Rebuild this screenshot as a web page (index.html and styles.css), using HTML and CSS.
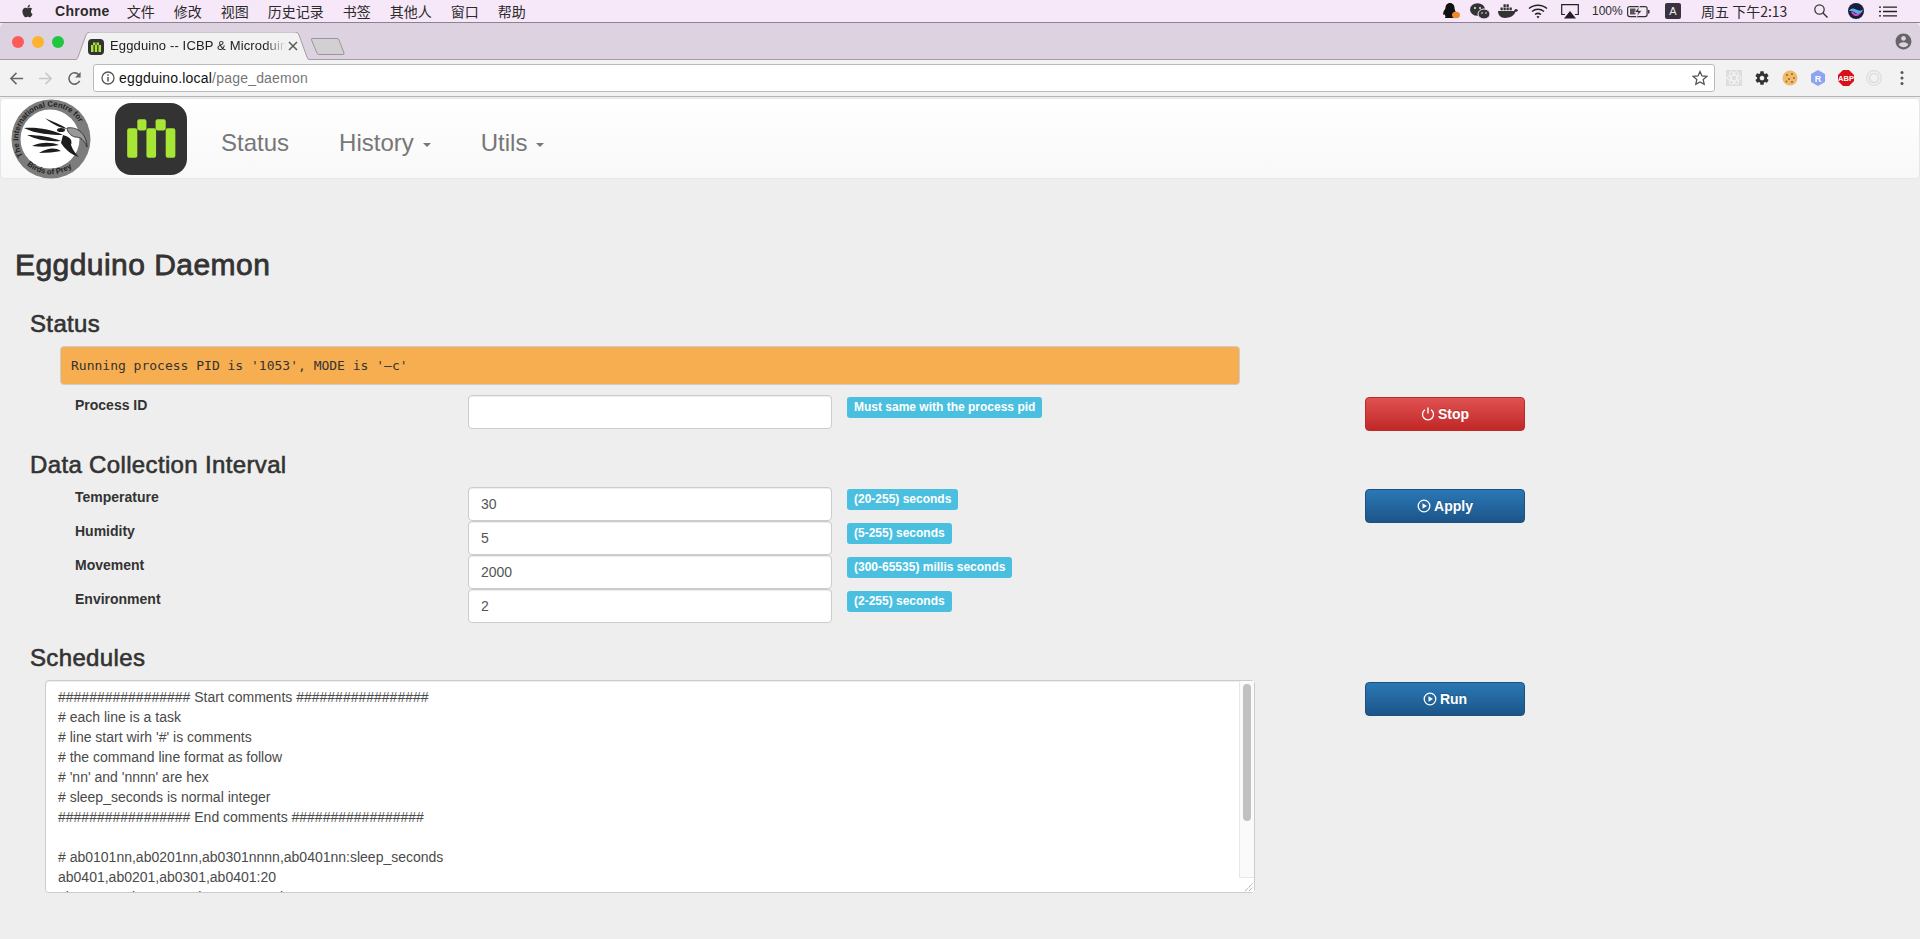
FILE: index.html
```html
<!DOCTYPE html>
<html>
<head>
	<title>Eggduino Daemon</title>
	<link rel="stylesheet" href="styles.css">
</head>
<body>
	<!-- mac menu bar -->
	<div class="menubar">
		<div class="menu-left">
			<svg class="apple" viewBox="0 0 24 24"><path d="M18.71 19.5c-.83 1.24-1.71 2.45-3.05 2.47-1.34.03-1.77-.79-3.29-.79-1.53 0-2 .77-3.27.82-1.31.05-2.3-1.32-3.14-2.53C4.25 17 2.94 12.45 4.7 9.39c.87-1.52 2.43-2.48 4.12-2.51 1.28-.02 2.5.87 3.29.87.78 0 2.26-1.07 3.8-.91.65.03 2.47.26 3.64 1.98-.09.06-2.17 1.28-2.15 3.81.03 3.02 2.65 4.03 2.68 4.04-.03.07-.42 1.44-1.38 2.83M13 3.5c.73-.83 1.94-1.46 2.94-1.5.13 1.17-.34 2.35-1.04 3.19-.69.85-1.83 1.51-2.95 1.42-.15-1.15.41-2.35 1.05-3.11z"/></svg>
			<strong class="app-name">Chrome</strong>
			<span>文件</span>
			<span>修改</span>
			<span>视图</span>
			<span>历史记录</span>
			<span>书签</span>
			<span>其他人</span>
			<span>窗口</span>
			<span>帮助</span>
		</div>
		<div class="menu-right">
			<svg class="tray tray-qq" viewBox="0 0 17 16"><path d="M7 0c3 0 4.5 2.4 4.5 5 0 1 .8 2.5 1.2 4.500.3 1.500 0 2.500-.7 2.500l-.8-.8c0 1.500-1 2.300-1 2.300.8.300 1 1 .6 1.500H2.200c-.6-.5-.2-1.200.6-1.500 0 0-1-.8-1-2.300l-.8.8c-.8 0-1-1-.7-2.500C.7 7.500 2.500 6 2.500 5 2.500 2.400 4 0 7 0z" fill="#111"/><ellipse cx="13" cy="12" rx="4" ry="3.200" fill="#ee8a2e"/></svg>
			<svg class="tray tray-wechat" viewBox="0 0 20 17"><ellipse cx="7.500" cy="6.500" rx="7.500" ry="6.300" fill="#333"/><ellipse cx="14" cy="11" rx="6" ry="5" fill="#333" stroke="#f6e8f8" stroke-width="1"/><circle cx="5" cy="5" r="1" fill="#f6e8f8"/><circle cx="10" cy="5" r="1" fill="#f6e8f8"/><circle cx="12" cy="10" r=".8" fill="#f6e8f8"/><circle cx="16" cy="10" r=".8" fill="#f6e8f8"/></svg>
			<svg class="tray tray-docker" viewBox="0 0 20 14"><path d="M0 7h16c.5-1.500 1.500-2 2-2 0 0 2 .5 2 1.500-.5 1-1.500 1.300-2.500 1.300C16 12 12 14 7 14 2.500 14 0 11 0 7z" fill="#333"/><path d="M2.500 3.500h2.300v2.800H2.500zM5.500 3.500h2.300v2.800H5.500zM8.500 3.500h2.300v2.800H8.500zM5.500.3h2.300v2.600H5.500zM8.500.3h2.300v2.600H8.500zM11.500 3.500h2.300v2.800h-2.300z" fill="#333"/></svg>
			<svg class="tray tray-wifi" viewBox="0 0 20 15"><g fill="none" stroke="#222" stroke-width="1.500"><path d="M1 4.500c5-4.500 13-4.500 18 0"/><path d="M4 7.500c3.500-3 8.500-3 12 0"/><path d="M7 10.500c2-1.500 4-1.500 6 0"/></g><path d="M8.500 12.500c1-.8 2-.8 3 0L10 14.500z" fill="#222"/></svg>
			<svg class="tray tray-airplay" viewBox="0 0 18 15"><path d="M4 10.500H.7V.7h16.600v9.800H14" fill="none" stroke="#222" stroke-width="1.200"/><path d="M9 7l6 7.500H3z" fill="#222"/></svg>
			<span class="tray-text tray-percent">100%</span>
			<svg class="tray tray-battery" viewBox="0 0 23 13"><rect x=".6" y="1.600" width="19.500" height="10" rx="2" fill="none" stroke="#333" stroke-width="1.200"/><path d="M3 3.500h5.500v6H3z" fill="#555"/><path d="M12.500 1l-5 6.500h3.500L9.500 12l5.500-6.500h-3.500z" fill="#333" stroke="#f6e8f8" stroke-width=".7"/><rect x="21" y="5" width="1.500" height="3.500" fill="#333"/></svg>
			<span class="input-badge">A</span>
			<span class="tray-text tray-clock">周五 下午2:13</span>
			<svg class="tray tray-search" viewBox="0 0 14 14"><circle cx="5.500" cy="5.500" r="4.700" fill="none" stroke="#333" stroke-width="1.200"/><path d="M9 9l4.500 4.500" stroke="#333" stroke-width="1.400"/></svg>
			<svg class="tray tray-siri" viewBox="0 0 16 16"><circle cx="8" cy="8" r="8" fill="#1c1c3c"/><path d="M1 8c2.500-3 4-3 7-1.500S13 8 15 6.500C14 11 10 12 7.500 10S3 8 1 8z" fill="#4fb4ee"/><path d="M3 9c2.500-1 3.500 2.500 6 2s3-2 4-2c-1 3-3 4.500-5.500 4S4 11 3 9z" fill="#d04fc0"/></svg>
			<svg class="tray tray-list" viewBox="0 0 18 11"><path d="M4 1.200h14M4 5.500h14M4 9.800h14" stroke="#222" stroke-width="1.300"/><path d="M0 1.200h2M0 5.500h2M0 9.800h2" stroke="#222" stroke-width="1.300"/></svg>
		</div>
	</div>

	<!-- chrome window -->
	<div class="tabstrip">
		<div class="lights">
			<i class="light light-red"></i>
			<i class="light light-yellow"></i>
			<i class="light light-green"></i>
		</div>
		<div class="tab">
			<svg class="tab-shape" viewBox="0 0 242 28" preserveAspectRatio="none"><path d="M0 28h3q2 0 3-3L14 3q1-3 4-3h205q3 0 4 3l8 22q1 3 3 3h4" fill="#f2f2f2" stroke="#a59ca6"/></svg>
			<svg class="favicon" viewBox="0 0 16 16"><rect width="16" height="16" rx="4" fill="#333"/><path d="M3 6h2.500v7H3zM6.800 6h2.400v7H6.800zM10.500 6H13v7h-2.500zM5 3.500h2.500V6H5zM8.500 3.500H11V6H8.500z" fill="#a8e635"/></svg>
			<span class="tab-title">Eggduino -- ICBP &amp; Microduino</span>
			<svg class="tab-close" viewBox="0 0 10 10"><path d="M1 1l8 8M9 1l-8 8" stroke="#5a5a5a" stroke-width="1.500"/></svg>
		</div>
		<svg class="new-tab" viewBox="0 0 34 17"><path d="M1 .5h25q1.500 0 2 1.500l5 13q.3 1.500-1 1.500H8q-1.500 0-2-1.500L.5 2Q0 .5 1 .5z" fill="#d2d0d2" stroke="#9c969c"/></svg>
		<svg class="profile" viewBox="0 0 24 24"><path d="M12 2C6.480 2 2 6.480 2 12s4.480 10 10 10 10-4.480 10-10S17.520 2 12 2zm0 3c1.660 0 3 1.340 3 3s-1.340 3-3 3-3-1.340-3-3 1.340-3 3-3zm0 14.200c-2.500 0-4.710-1.280-6-3.220.03-1.990 4-3.080 6-3.080 1.990 0 5.970 1.090 6 3.080-1.290 1.940-3.500 3.220-6 3.220z" fill="#686468"/></svg>
	</div>
	<div class="toolbar">
		<svg class="nav-icon" viewBox="0 0 16 16"><path d="M15 8H2M8 2L2 8l6 6" fill="none" stroke="#666" stroke-width="1.600"/></svg>
		<svg class="nav-icon nav-forward" viewBox="0 0 16 16"><path d="M1 8h13M8 2l6 6-6 6" fill="none" stroke="#c8c8c8" stroke-width="1.600"/></svg>
		<svg class="nav-icon nav-reload" viewBox="0 0 16 16"><path d="M13.500 10.500A6 6 0 1 1 13 4.500" fill="none" stroke="#666" stroke-width="1.700"/><path d="M14.500 1v6h-6z" fill="#666"/></svg>
		<div class="omnibox">
			<svg class="info-icon" viewBox="0 0 14 14"><circle cx="7" cy="7" r="6" fill="none" stroke="#555" stroke-width="1.300"/><path d="M7 6v4.500M7 3.300v1.500" stroke="#555" stroke-width="1.500"/></svg>
			<span class="url">eggduino.local<span class="url-path">/page_daemon</span></span>
			<svg class="star" viewBox="0 0 16 16"><path d="M8 1.500l2 4.400 4.800.5-3.600 3.200 1 4.700L8 11.900l-4.200 2.400 1-4.700L1.200 6.400 6 5.900z" fill="none" stroke="#555" stroke-width="1.300"/></svg>
		</div>
		<div class="extensions">
			<svg class="ext" viewBox="0 0 16 16"><rect width="16" height="16" fill="#dedede"/><g fill="none" stroke="#f4f4f4"><ellipse cx="8" cy="8" rx="7" ry="2.800"/><ellipse cx="8" cy="8" rx="7" ry="2.800" transform="rotate(60 8 8)"/><ellipse cx="8" cy="8" rx="7" ry="2.800" transform="rotate(120 8 8)"/></g></svg>
			<svg class="ext" viewBox="0 0 24 24"><path d="M19.430 12.980c.04-.32.070-.64.070-.98s-.03-.66-.07-.98l2.110-1.650c.19-.15.24-.42.120-.64l-2-3.460c-.12-.22-.39-.3-.61-.22l-2.490 1c-.52-.4-1.080-.73-1.690-.98l-.38-2.650C14.460 2.180 14.250 2 14 2h-4c-.25 0-.46.18-.49.420l-.38 2.650c-.61.25-1.170.59-1.690.98l-2.490-1c-.23-.09-.49 0-.61.220l-2 3.460c-.13.22-.07.490.12.640l2.110 1.650c-.04.32-.07.650-.07.980s.03.660.07.980l-2.110 1.650c-.19.150-.24.420-.12.640l2 3.460c.12.220.39.300.61.220l2.490-1c.52.400 1.080.730 1.690.980l.38 2.650c.03.240.24.420.49.420h4c.25 0 .46-.18.49-.42l.38-2.650c.61-.25 1.170-.59 1.690-.98l2.490 1c.23.090.49 0 .61-.22l2-3.460c.12-.22.07-.49-.12-.64l-2.110-1.650zM12 15.500c-1.930 0-3.500-1.570-3.500-3.500s1.570-3.500 3.500-3.500 3.500 1.570 3.500 3.500-1.570 3.500-3.500 3.500z" fill="#333"/></svg>
			<svg class="ext" viewBox="0 0 16 16"><circle cx="8" cy="8" r="7.500" fill="#eebb6a"/><g fill="#a5652a"><circle cx="5" cy="5" r="1.100"/><circle cx="10" cy="4" r="1"/><circle cx="12" cy="8" r="1"/><circle cx="7" cy="9" r="1.100"/><circle cx="10" cy="12" r="1.100"/><circle cx="4.500" cy="11.500" r=".9"/></g></svg>
			<svg class="ext" viewBox="0 0 16 16"><path d="M8 0l7 4v8l-7 4-7-4V4z" fill="#8ea4f0"/><text x="8" y="11.500" class="ext-r">R</text></svg>
			<svg class="ext" viewBox="0 0 16 16"><path d="M5 0h6l5 5v6l-5 5H5l-5-5V5z" fill="#d8101c"/><text x="8" y="11" class="ext-abp">ABP</text></svg>
			<svg class="ext" viewBox="0 0 16 16"><g fill="none" stroke="#dcdcdc"><circle cx="8" cy="8" r="7.300" stroke-width="1.200"/><circle cx="8" cy="8" r="4.500" stroke-width="1.600"/></g></svg>
		</div>
		<svg class="menu-dots" viewBox="0 0 4 16"><g fill="#555"><circle cx="2" cy="2.500" r="1.500"/><circle cx="2" cy="8" r="1.500"/><circle cx="2" cy="13.500" r="1.500"/></g></svg>
	</div>

	<!-- page -->
	<nav class="navbar">
		<svg class="logo-bird" viewBox="0 0 80 80">
			<defs>
				<path id="ringTop" d="M12 57A32.700 32.700 0 1 1 72 33"/>
				<path id="ringBottom" d="M16 66A35.500 35.500 0 0 0 64 66"/>
			</defs>
			<circle cx="40" cy="40" r="39.500" fill="#7c7c7c"/>
			<circle cx="39" cy="40" r="29.500" fill="#fff"/>
			<text class="ring-text"><textPath href="#ringTop">The International Centre for</textPath></text>
			<text class="ring-text"><textPath href="#ringBottom">Birds of Prey</textPath></text>
			<g fill="#1c1c1c">
				<path d="M13 29C25 28 40 30 52 36 40 36 25 35 13 29z"/>
				<path d="M16 36C28 36 40 38 50 42 38 43 26 41 16 36z"/>
				<path d="M21 47C30 43 40 43 48 46 38 48 30 48 21 47z"/>
				<path d="M28 54C36 49 44 48 50 52 44 53 36 54 28 54z"/>
				<path d="M52 36C58 38 62 40 60 46 62 52 66 56 68 58 60 56 54 50 50 44z"/>
				<path d="M34 19C42 23 50 25 56 30 50 29 42 26 34 19z"/>
				<ellipse cx="50" cy="31" rx="4" ry="2"/>
			</g>
			<path d="M56 29C67 27 76 36 76 48 73 41 70 38 64 38 60 37 56 33 56 29z" fill="#999" stroke="#222" stroke-width=".8"/>
		</svg>
		<svg class="logo-m" viewBox="0 0 71 71">
			<rect width="71" height="71" rx="16" fill="#333"/>
			<g fill="#a8e635">
				<rect x="12" y="25" width="10" height="29" rx="2"/>
				<rect x="22" y="16" width="9" height="11" rx="2"/>
				<rect x="31" y="25" width="9.500" height="29" rx="2"/>
				<rect x="40" y="16" width="10" height="11" rx="2"/>
				<rect x="50" y="25" width="9.500" height="29" rx="2"/>
			</g>
		</svg>
		<a class="nav-link">Status</a>
		<a class="nav-link">History<i class="caret"></i></a>
		<a class="nav-link">Utils<i class="caret"></i></a>
	</nav>

	<div class="content">
		<h2>Eggduino Daemon</h2>

		<section class="block">
			<h3>Status</h3>
			<pre class="status-line">Running process PID is '1053', MODE is '–c'</pre>
			<div class="form-grid">
				<label>Process ID</label>
				<input class="field" type="text">
				<div class="hint"><span class="badge">Must same with the process pid</span></div>
				<button class="btn btn-danger">
					<svg class="btn-icon" viewBox="0 0 14 14"><path d="M4 2.800a5.500 5.500 0 1 0 6 0" fill="none" stroke="#fff" stroke-width="1.300"/><path d="M7 .5v6" stroke="#fff" stroke-width="1.400"/></svg>Stop
				</button>
			</div>
		</section>

		<section class="block">
			<h3>Data Collection Interval</h3>
			<div class="form-grid">
				<label>Temperature</label>
				<input class="field" type="text" value="30">
				<div class="hint"><span class="badge">(20-255) seconds</span></div>
				<button class="btn btn-primary">
					<svg class="btn-icon" viewBox="0 0 14 14"><circle cx="7" cy="7" r="5.800" fill="none" stroke="#fff" stroke-width="1.300"/><path d="M5.500 4.200L10 7l-4.500 2.800z" fill="#fff"/></svg>Apply
				</button>

				<label>Humidity</label>
				<input class="field" type="text" value="5">
				<div class="hint"><span class="badge">(5-255) seconds</span></div>
				<div></div>

				<label>Movement</label>
				<input class="field" type="text" value="2000">
				<div class="hint"><span class="badge">(300-65535) millis seconds</span></div>
				<div></div>

				<label>Environment</label>
				<input class="field" type="text" value="2">
				<div class="hint"><span class="badge">(2-255) seconds</span></div>
				<div></div>
			</div>
		</section>

		<section class="block">
			<h3>Schedules</h3>
			<div class="schedule-row">
				<div class="schedule-box">
<textarea class="schedule" spellcheck="false">################# Start comments #################
# each line is a task
# line start wirh '#' is comments
# the command line format as follow
# 'nn' and 'nnnn' are hex
# sleep_seconds is normal integer
################# End comments #################

# ab0101nn,ab0201nn,ab0301nnnn,ab0401nn:sleep_seconds
ab0401,ab0201,ab0301,ab0401:20
ab040100,ab020100,ab03010000,ab040100:10000</textarea>
					<div class="scrollbar">
						<div class="scroll-thumb"></div>
						<svg class="scroll-corner" viewBox="0 0 15 15"><path d="M6 14l8-8M10 14l4-4" stroke="#666" stroke-width="1" stroke-dasharray="1 1"/></svg>
					</div>
				</div>
				<button class="btn btn-primary">
					<svg class="btn-icon" viewBox="0 0 14 14"><circle cx="7" cy="7" r="5.800" fill="none" stroke="#fff" stroke-width="1.300"/><path d="M5.500 4.200L10 7l-4.500 2.800z" fill="#fff"/></svg>Run
				</button>
			</div>
		</section>
	</div>
</body>
</html>
```

FILE: styles.css
```css
html, body {
	margin: 0;
	height: 939px;
	overflow: hidden;
}
body {
	background-color: #eee;
	color: #333;
	font-family: "Liberation Sans", Arial, sans-serif;
	font-size: 14px;
	line-height: 20px;
}

/* mac menu bar */
.menubar {
	height: 22px;
	display: flex;
	justify-content: space-between;
	align-items: center;
	padding: 0 23px 0 20px;
	background-color: #f6e8f8;
	border-bottom: 1px solid #8f7f95;
	color: #2b2b2b;
	font-family: "Noto Sans CJK SC", "Liberation Sans", sans-serif;
	font-size: 14px;
}
.menu-left, .menu-right {
	display: flex;
	align-items: center;
}
.menu-left {
	gap: 19px;
}
.apple {
	width: 15px;
	height: 16px;
	fill: #333;
	margin-right: 1px;
}
.app-name {
	margin-right: -2px;
	font-family: "Liberation Sans", sans-serif;
	font-size: 14px;
	letter-spacing: .3px;
}
.tray {
	display: block;
}
.tray-qq { width: 17px; height: 16px; }
.tray-wechat { width: 20px; height: 17px; margin-left: 10px; }
.tray-docker { width: 20px; height: 14px; margin-left: 8px; }
.tray-wifi { width: 20px; height: 15px; margin-left: 10px; }
.tray-airplay { width: 18px; height: 15px; margin-left: 13px; }
.tray-battery { width: 23px; height: 13px; margin-left: 5px; }
.tray-search { width: 14px; height: 14px; margin-left: 25px; }
.tray-siri { width: 16px; height: 16px; margin-left: 20px; }
.tray-list { width: 18px; height: 11px; margin-left: 15px; }
.tray-text {
	font-size: 12px;
	white-space: nowrap;
}
.tray-percent {
	margin-left: 13px;
	width: 30px;
	font-family: "Liberation Sans", sans-serif;
}
.tray-clock {
	margin-left: 20px;
	width: 88px;
	font-size: 14px;
}
.input-badge {
	width: 16px;
	height: 16px;
	margin-left: 15px;
	border-radius: 2px;
	background-color: #3a3240;
	color: #eee;
	font-family: "Liberation Sans", sans-serif;
	font-size: 11px;
	line-height: 16px;
	text-align: center;
}

/* tabs */
.tabstrip {
	height: 36px;
	display: flex;
	align-items: flex-end;
	background-color: #ddd3e0;
	border-bottom: 1px solid #a59ca6;
	border-radius: 5px 5px 0 0;
}
.lights {
	display: flex;
	gap: 8px;
	align-self: flex-start;
	padding: 13px 0 0 12px;
}
.light {
	width: 12px;
	height: 12px;
	border-radius: 50%;
}
.light-red { background-color: #fc5b57; }
.light-yellow { background-color: #fdb32e; }
.light-green { background-color: #1fc73f; }
.tab {
	width: 242px;
	height: 28px;
	margin-left: 8px;
	margin-bottom: -1px;
	position: relative;
	display: flex;
	align-items: center;
	padding-left: 16px;
	box-sizing: border-box;
	font-size: 13px;
	color: #222;
}
.tab-shape {
	position: absolute;
	left: 0;
	top: 0;
	width: 100%;
	height: 100%;
}
.favicon, .tab-title, .tab-close {
	position: relative;
}
.favicon {
	width: 16px;
	height: 16px;
	margin-top: 2px;
}
.tab-title {
	width: 176px;
	margin-left: 6px;
	white-space: nowrap;
	overflow: hidden;
	letter-spacing: .15px;
	-webkit-mask-image: linear-gradient(to right, #000 88%, transparent);
	mask-image: linear-gradient(to right, #000 88%, transparent);
}
.tab-close {
	width: 10px;
	height: 10px;
	margin-left: 2px;
}
.new-tab {
	width: 34px;
	height: 17px;
	margin: 0 0 4px -3px;
}
.profile {
	width: 19px;
	height: 19px;
	margin: 0 7px 8px auto;
}

/* toolbar */
.toolbar {
	height: 36px;
	display: flex;
	align-items: center;
	background-color: #f2f2f2;
	border-bottom: 1px solid #b4b4b4;
	padding-left: 9px;
}
.nav-icon {
	width: 15px;
	height: 15px;
}
.nav-forward { margin-left: 14px; }
.nav-reload { margin-left: 14px; }
.omnibox {
	width: 1622px;
	height: 28px;
	margin-left: 11px;
	display: flex;
	align-items: center;
	background-color: #fff;
	border: 1px solid #bbb;
	border-radius: 3px;
	box-sizing: border-box;
	padding: 0 6px 0 7px;
}
.info-icon {
	width: 14px;
	height: 14px;
}
.url {
	margin-left: 4px;
	font-size: 14px;
	letter-spacing: .2px;
	color: #111;
	flex: 1;
}
.url-path {
	color: #777;
}
.star {
	width: 16px;
	height: 16px;
}
.extensions {
	display: flex;
	gap: 12px;
	margin-left: 11px;
}
.ext {
	width: 16px;
	height: 16px;
}
.ext-r {
	fill: #fff;
	font-size: 9px;
	font-weight: bold;
	text-anchor: middle;
}
.ext-abp {
	fill: #fff;
	font-size: 7.500px;
	font-weight: bold;
	text-anchor: middle;
}
.menu-dots {
	width: 4px;
	height: 16px;
	margin-left: 18px;
}

/* navbar */
.navbar {
	height: 79px;
	display: flex;
	align-items: center;
	background: linear-gradient(to bottom, #fff, #f8f8f8);
	border: 1px solid #e7e7e7;
	border-radius: 4px;
	margin-top: 1px;
}
.logo-bird {
	width: 80px;
	height: 80px;
	margin-left: 10px;
}
.logo-m {
	width: 72px;
	height: 72px;
	margin-left: 24px;
}
.ring-text {
	fill: #222;
	font-size: 7.800px;
	font-weight: bold;
}
.nav-link {
	margin-top: 9px;
	font-size: 24px;
	line-height: 30px;
	color: #777;
	white-space: nowrap;
}
.logo-m + .nav-link { margin-left: 34px; }
.nav-link + .nav-link { margin-left: 50px; }
.caret {
	display: inline-block;
	width: 0;
	height: 0;
	margin-left: 9px;
	vertical-align: middle;
	border-top: 4px solid #777;
	border-left: 4px solid transparent;
	border-right: 4px solid transparent;
}

/* content */
.content {
	padding: 69px 15px 0;
}
h2 {
	margin: 0 0 30px;
	font-size: 30px;
	line-height: 33px;
	font-weight: 500;
	letter-spacing: .45px;
	-webkit-text-stroke: .8px #333;
}
h3 {
	margin: 0 0 9px;
	font-size: 24px;
	line-height: 26px;
	font-weight: 500;
	letter-spacing: .35px;
	-webkit-text-stroke: .6px #333;
}
.block {
	padding-left: 15px;
	margin-bottom: 22px;
}
.block:first-of-type {
	margin-bottom: 23px;
}
.status-line {
	width: 1180px;
	box-sizing: border-box;
	height: 39px;
	margin: 0 0 10px 30px;
	padding: 9px 10px;
	background-color: #f6ae50;
	border: 1px solid #ccc;
	border-radius: 4px;
	color: #333;
	font-family: "DejaVu Sans Mono", monospace;
	font-size: 13px;
	line-height: 19px;
}
.form-grid {
	display: grid;
	grid-template-columns: 408px 364px 533px 160px;
	grid-auto-rows: 34px;
	margin-left: 30px;
}
label {
	padding-left: 15px;
	font-weight: bold;
}
.field {
	box-sizing: border-box;
	height: 34px;
	width: 100%;
	padding: 6px 12px;
	background-color: #fff;
	border: 1px solid #ccc;
	border-radius: 4px;
	box-shadow: inset 0 1px 1px rgba(0,0,0,.075);
	color: #555;
	font-family: "Liberation Sans", Arial, sans-serif;
	font-size: 14px;
	outline: none;
}
.hint {
	padding: 2px 0 0 15px;
}
.badge {
	display: inline-block;
	padding: 0 7px;
	height: 21px;
	background-color: #4abfdf;
	border-radius: 3px;
	color: #fff;
	font-size: 12px;
	font-weight: bold;
	line-height: 20px;
	vertical-align: top;
}
.btn {
	display: flex;
	align-items: center;
	justify-content: center;
	gap: 3px;
	width: 160px;
	height: 34px;
	margin-top: 2px;
	padding: 0;
	border-radius: 4px;
	color: #fff;
	font-family: "Liberation Sans", Arial, sans-serif;
	font-size: 14px;
	font-weight: bold;
	text-shadow: 0 -1px 0 rgba(0,0,0,.2);
	cursor: pointer;
}
.btn-danger {
	background: linear-gradient(to bottom, #e05252, #c12727);
	border: 1px solid #b92c28;
}
.btn-primary {
	background: linear-gradient(to bottom, #2a78b6, #1c5588);
	border: 1px solid #1f4f7d;
}
.btn-icon {
	width: 14px;
	height: 14px;
}
.schedule-row {
	display: flex;
	align-items: flex-start;
}
.schedule-box {
	position: relative;
	width: 1210px;
	height: 213px;
	margin: 0 110px 0 15px;
}
.schedule {
	width: 100%;
	height: 100%;
	box-sizing: border-box;
	margin: 0;
	padding: 6px 12px;
	display: block;
	background-color: #fff;
	border: 1px solid #ccc;
	border-radius: 4px;
	box-shadow: inset 0 1px 1px rgba(0,0,0,.075);
	color: #4a4a4a;
	font-family: "Liberation Sans", Arial, sans-serif;
	font-size: 14px;
	line-height: 20px;
	overflow: hidden;
	outline: none;
	resize: none;
}
.scrollbar {
	position: absolute;
	top: 1px;
	right: 1px;
	bottom: 1px;
	width: 15px;
	display: flex;
	flex-direction: column;
	justify-content: space-between;
	background-color: #fafafa;
	border-left: 1px solid #e8e8e8;
	box-sizing: border-box;
}
.scroll-thumb {
	width: 8px;
	height: 137px;
	margin: 3px 0 0 3px;
	border-radius: 4px;
	background-color: #c1c1c1;
}
.scroll-corner {
	display: block;
	width: 15px;
	height: 15px;
	margin-left: -1px;
	background-color: #fff;
	border-top: 1px solid #e8e8e8;
	box-sizing: border-box;
}
```
